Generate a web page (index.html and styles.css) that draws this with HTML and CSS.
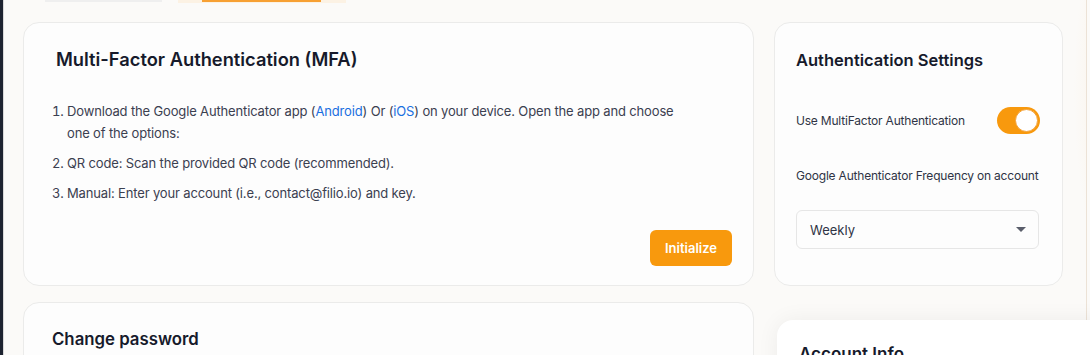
FILE: index.html
```html
<!DOCTYPE html>
<html lang="en">
<head>
  <meta charset="UTF-8" />
  <title>Security settings</title>
  <link rel="stylesheet" href="styles.css">
</head>
<body>
  <div class="app">
    <aside class="rail"></aside>

    <main class="page">
      <nav class="tabs">
        <span class="tab"></span>
        <span class="tab tab-active"><span class="tab-line"></span></span>
      </nav>

      <div class="grid">
        <section class="card mfa">
          <h2>Multi-Factor Authentication (MFA)</h2>
          <ol class="steps">
            <li>Download the Google Authenticator app (<a href="#">Android</a>) Or (<a href="#">iOS</a>) on your device. Open the app and choose one of the options:</li>
            <li>QR code: Scan the provided QR code (recommended).</li>
            <li>Manual: Enter your account (i.e., contact@filio.io) and key.</li>
          </ol>
          <div class="actions">
            <button class="btn-primary" type="button">Initialize</button>
          </div>
        </section>

        <section class="card settings">
          <h3>Authentication Settings</h3>
          <div class="row">
            <span class="field-label">Use MultiFactor Authentication</span>
            <span class="toggle on"><span class="knob"></span></span>
          </div>
          <div class="field-label freq">Google Authenticator Frequency on account</div>
          <div class="select">
            <span>Weekly</span>
            <span class="caret"></span>
          </div>
        </section>

        <section class="card password">
          <h2>Change password</h2>
        </section>

        <section class="card account">
          <h3>Account Info</h3>
        </section>
      </div>
    </main>
  </div>
</body>
</html>
```

FILE: styles.css
```css
* {
  box-sizing: border-box;
}

html, body {
  margin: 0;
  height: 100%;
}

body {
  font-family: Inter, 'Noto Sans', sans-serif;
  background: #fbfaf8;
  color: #3b4050;
  overflow: hidden;
}

.app {
  display: flex;
  min-height: 100vh;
}

.rail {
  width: 4px;
  flex-shrink: 0;
  background: #1d2330;
  border-right: 1px solid #d9d9d9;
}

.page {
  width: 1083px;
  flex-shrink: 0;
  padding-left: 19px;
  border-right: 1px solid #ece2d6;
  background:
    radial-gradient(ellipse 60px 220px at 1130px 90px, rgba(250, 226, 196, 0.55), rgba(250, 226, 196, 0) 100%),
    #fbfaf8;
}

.tabs {
  display: flex;
  gap: 16px;
  height: 3px;
  padding-left: 22px;
}

.tab {
  width: 117px;
  height: 2px;
  background: #efefef;
}

.tab-active {
  width: 168px;
  height: 3px;
  background: #fcf2e4;
  padding-left: 24px;
}

.tab-line {
  display: block;
  width: 119px;
  height: 2px;
  background: #f7a033;
}

.grid {
  display: grid;
  grid-template-columns: 731px 289px;
  column-gap: 20px;
  row-gap: 16px;
  margin-top: 19px;
}

.card {
  background: #fdfdfd;
  border: 1px solid #ebebea;
  border-radius: 16px;
}

h2, h3 {
  margin: 0;
  color: #161a2b;
  font-weight: 600;
}

h2 {
  font-size: 18.3px;
  line-height: 24px;
}

h3 {
  font-size: 16.5px;
  line-height: 22px;
}

/* MFA card */
.mfa {
  padding: 24px 21px 19px 32px;
}

.steps {
  margin: 29px 0 0;
  padding-left: 11px;
  max-width: 630px;
  font-size: 13px;
  line-height: 22px;
  letter-spacing: -0.15px;
}

.steps li {
  margin-bottom: 8px;
}

.steps li:last-child {
  margin-bottom: 0;
}

.steps a {
  color: #1a6fe0;
  text-decoration: none;
}

.actions {
  display: flex;
  justify-content: flex-end;
  margin-top: 26px;
}

.btn-primary {
  font-family: inherit;
  background: #f8990d;
  color: #fff;
  border: none;
  border-radius: 6px;
  width: 82px;
  height: 36px;
  font-size: 13px;
  font-weight: 600;
  cursor: pointer;
}

/* Settings card */
.settings {
  padding: 26px 23px 20px 21px;
}

.row {
  display: flex;
  justify-content: space-between;
  align-items: center;
  margin-top: 36px;
}

.field-label {
  font-size: 12px;
  line-height: 18px;
  letter-spacing: -0.2px;
  color: #2f3445;
  white-space: nowrap;
}

.freq {
  margin-top: 33px;
}

.toggle {
  position: relative;
  width: 43px;
  height: 27px;
  border-radius: 14px;
  background: #f8990d;
  margin-right: -1px;
}

.toggle .knob {
  position: absolute;
  top: 2px;
  right: 2px;
  width: 23px;
  height: 23px;
  border-radius: 50%;
  background: #fff;
  border: 1px solid #f3a23a;
}

.select {
  display: flex;
  justify-content: space-between;
  align-items: center;
  height: 39px;
  margin-top: 25px;
  padding: 0 12px 0 13px;
  border: 1px solid #e6e6e6;
  border-radius: 6px;
  background: #fdfdfd;
  font-size: 13px;
  color: #2f3445;
}

.caret {
  width: 0;
  height: 0;
  border-left: 5px solid transparent;
  border-right: 5px solid transparent;
  border-top: 5px solid #5a5e6b;
}

/* Bottom row */
.password {
  height: 120px;
  padding: 24px 28px;
}

.password h2 {
  font-size: 16.8px;
}

.account {
  align-self: start;
  margin: 18px -60px 0 3px;
  height: 120px;
  padding: 23px 22px;
  background: #fff;
  border: none;
  box-shadow: 0 0 22px rgba(0, 0, 0, 0.06);
  position: relative;
  z-index: 1;
}

.account h3 {
  font-size: 17px;
}
```
